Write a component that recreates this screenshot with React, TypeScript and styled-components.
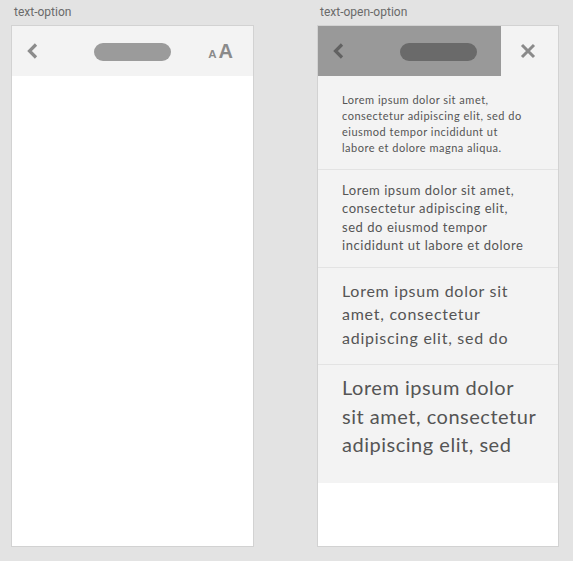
import React from "react";
import styled, { createGlobalStyle } from "styled-components";

const GlobalStyle = createGlobalStyle`
  html, body { margin: 0; padding: 0; background: #e3e3e3; }
  body { font-family: Roboto, "Liberation Sans", sans-serif; }
  * { box-sizing: border-box; }
`;

const Canvas = styled.div`
  display: flex;
  align-items: flex-start;
  gap: 63px;
  padding: 5px 0 0 11px;
  width: 573px;
  height: 561px;
`;

const Frame = styled.div`
  display: flex;
  flex-direction: column;
  gap: 6px;
`;

const Label = styled.div`
  font-family: Roboto, "Liberation Sans", sans-serif;
  font-size: 12px;
  line-height: 14px;
  height: 14px;
  color: #6a6a6a;
  padding-left: 3px;
`;

const Artboard = styled.div<{ $w: number }>`
  width: ${(p) => p.$w}px;
  height: 522px;
  border: 1px solid #d2d2d2;
  background: #ffffff;
  display: flex;
  flex-direction: column;
`;

const Header = styled.div`
  position: relative;
  height: 50px;
  flex: none;
  background: #f3f3f3;
  display: grid;
  grid-template-columns: 1fr auto 1fr;
  align-items: center;
`;

const Side = styled.div<{ $end?: boolean; $pad: number }>`
  display: flex;
  justify-content: ${(p) => (p.$end ? "flex-end" : "flex-start")};
  align-items: center;
  ${(p) => (p.$end ? `padding-right: ${p.$pad}px;` : `padding-left: ${p.$pad}px;`)}
`;

const Pill = styled.div`
  width: 77px;
  height: 18px;
  border-radius: 9px;
  background: #9b9b9b;
  margin-top: 1px;
`;

const Icon = styled.svg`
  display: block;
`;

const FontSize = styled.div`
  display: flex;
  align-items: baseline;
  gap: 2px;
  font-family: "Liberation Sans", Arial, sans-serif;
  font-weight: 700;
  color: #8a8a8a;
  margin-top: 1px;
`;

const SmallA = styled.span`
  font-size: 11.5px;
`;

const BigA = styled.span`
  font-size: 20px;
`;

const Overlay = styled.div`
  position: absolute;
  left: 0;
  top: 0;
  width: 183px;
  height: 50px;
  background: rgba(52, 52, 52, 0.47);
`;

const Options = styled.div`
  display: flex;
  flex-direction: column;
  background: #f3f3f3;
`;

const Option = styled.div<{ $h: number; $pt: number; $size: number; $lh: number; $ls: number; $last?: boolean }>`
  height: ${(p) => p.$h}px;
  padding: ${(p) => p.$pt}px 0 0 24px;
  font-family: Lato, "Noto Sans", sans-serif;
  font-size: ${(p) => p.$size}px;
  line-height: ${(p) => p.$lh}px;
  letter-spacing: ${(p) => p.$ls}em;
  color: #555555;
  border-bottom: ${(p) => (p.$last ? "none" : "1px solid #e3e3e3")};
`;

const Line = styled.span`
  display: block;
  white-space: nowrap;
`;

const Chevron = ({ color }: { color: string }) => (
  <Icon width="11" height="16" viewBox="0 0 11 16">
    <polyline points="9,1.5 2.5,8 9,14.5" fill="none" stroke={color} strokeWidth="3.2" strokeLinecap="butt" strokeLinejoin="miter" />
  </Icon>
);

const CloseIcon = () => (
  <Icon width="16" height="16" viewBox="0 0 16 16">
    <path d="M2 2 L14 14 M14 2 L2 14" stroke="#8a8a8a" strokeWidth="3" fill="none" />
  </Icon>
);

const options = [
  {
    h: 94, pt: 16, size: 11, lh: 16, ls: 0.045,
    lines: [
      "Lorem ipsum dolor sit amet,",
      "consectetur adipiscing elit, sed do",
      "eiusmod tempor incididunt ut",
      "labore et dolore magna aliqua.",
    ],
  },
  {
    h: 98, pt: 11, size: 13, lh: 18.3, ls: 0.042,
    lines: [
      "Lorem ipsum dolor sit amet,",
      "consectetur adipiscing elit,",
      "sed do eiusmod tempor",
      "incididunt ut labore et dolore",
    ],
  },
  {
    h: 97, pt: 11, size: 16, lh: 23.3, ls: 0.046,
    lines: ["Lorem ipsum dolor sit", "amet, consectetur", "adipiscing elit, sed do"],
  },
  {
    h: 118, pt: 8, size: 20, lh: 28.7, ls: 0.026,
    lines: ["Lorem ipsum dolor", "sit amet, consectetur", "adipiscing elit, sed"],
  },
];

export default function App() {
  return (
    <>
      <GlobalStyle />
      <Canvas>
        <Frame>
          <Label>text-option</Label>
          <Artboard $w={243}>
            <Header>
              <Side $pad={15}>
                <Chevron color="#8c8c8c" />
              </Side>
              <Pill />
              <Side $end $pad={20}>
                <FontSize>
                  <SmallA>A</SmallA>
                  <BigA>A</BigA>
                </FontSize>
              </Side>
            </Header>
          </Artboard>
        </Frame>
        <Frame>
          <Label>text-open-option</Label>
          <Artboard $w={242}>
            <Header>
              <Side $pad={15}>
                <Chevron color="#8c8c8c" />
              </Side>
              <Pill />
              <Side $end $pad={22}>
                <CloseIcon />
              </Side>
              <Overlay />
            </Header>
            <Options>
              {options.map((o, i) => (
                <Option key={i} $h={o.h} $pt={o.pt} $size={o.size} $lh={o.lh} $ls={o.ls} $last={i === options.length - 1}>
                  {o.lines.map((l) => (
                    <Line key={l}>{l}</Line>
                  ))}
                </Option>
              ))}
            </Options>
          </Artboard>
        </Frame>
      </Canvas>
    </>
  );
}
